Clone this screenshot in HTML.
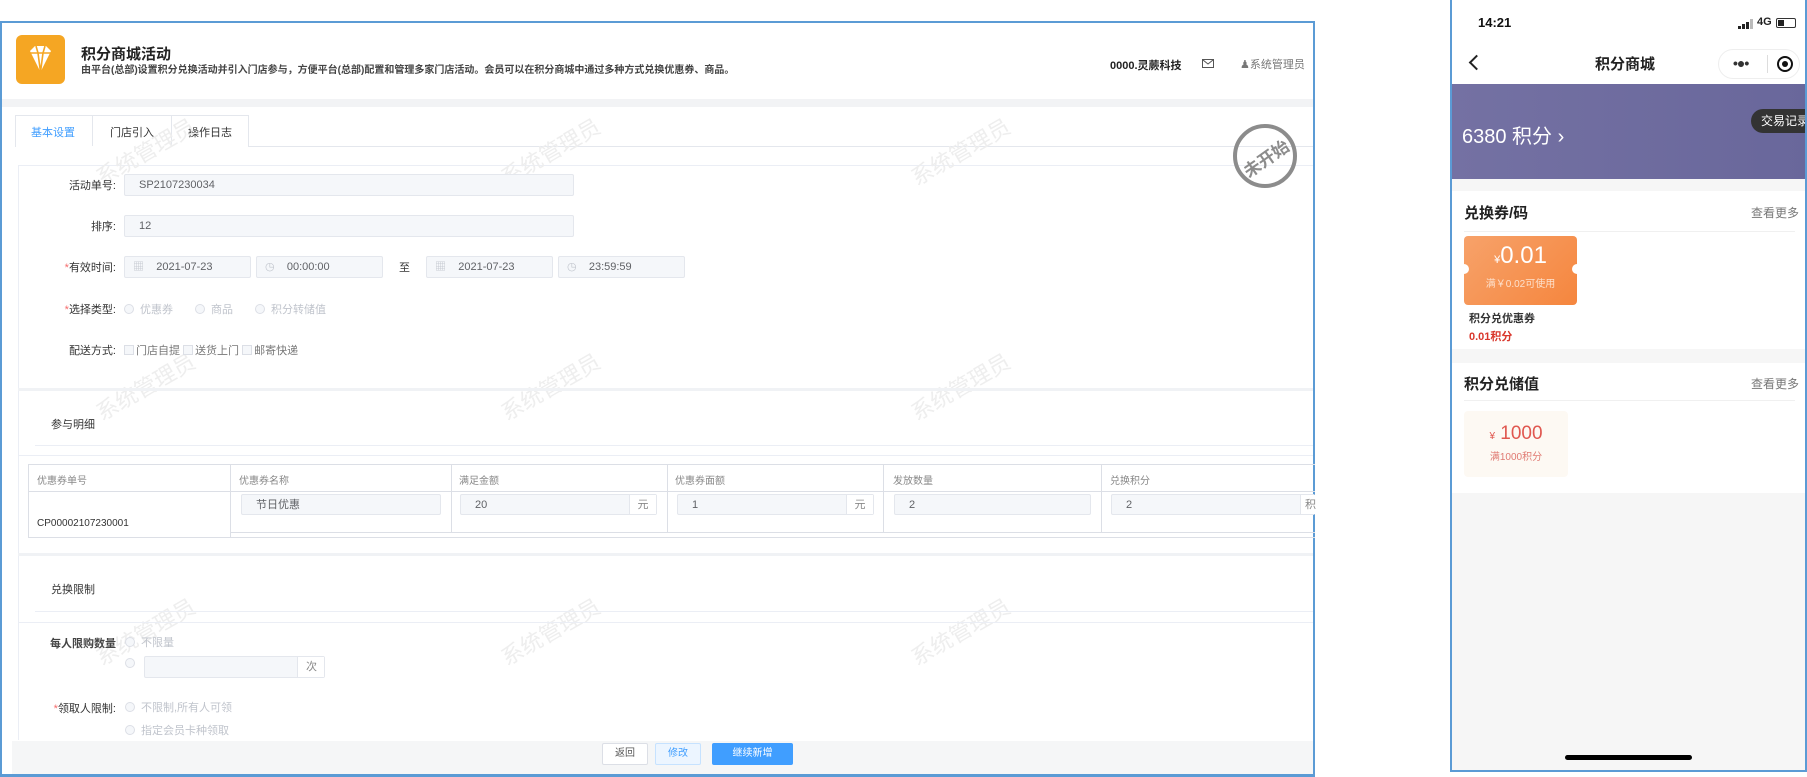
<!DOCTYPE html>
<html><head><meta charset="utf-8"><style>
*{margin:0;padding:0;box-sizing:border-box}
body{width:1807px;height:777px;background:#fff;position:relative;overflow:hidden;font-family:"Liberation Sans","Noto Sans CJK SC",sans-serif;color:#333;font-size:11px}
.a{position:absolute}
.inp{position:absolute;background:#f5f7fa;border:1px solid #e4e7ed;border-radius:2px;color:#606266;font-size:11px;line-height:20px;padding-left:14px}
.lbl{position:absolute;font-size:11px;color:#333;text-align:right;width:90px}
.req{color:#f56c6c}
.dis{color:#c0c4cc}
.rad{display:inline-block;width:10px;height:10px;border:1px solid #dcdfe6;border-radius:50%;vertical-align:-1px;margin-right:6px;background:#f5f7fa}
.chk{display:inline-block;width:10px;height:10px;border:1px solid #dcdfe6;vertical-align:-1px;margin-right:2px;background:#f5f7fa}
.wm{position:absolute;color:#eee;font-size:22px;transform:rotate(-30deg);white-space:nowrap}
.line{position:absolute;height:1px;background:#ebeef5}
</style></head><body>
<div class="a" style="left:0;top:21px;width:1315px;height:756px;border:2px solid #5b9bd5;border-bottom-width:3px"></div>
<div class="a" style="left:16px;top:35px;width:49px;height:49px;background:#f5a623;border-radius:6px">
<svg width="49" height="49" viewBox="0 0 49 49"><path d="M14 16 L19 11 H30 L35 16 L24.5 37 Z" fill="#fff"/><path d="M14 18 H35 M20 11 L22 18 L24.5 37 M29 11 L27 18 L24.5 37" stroke="#f5a623" stroke-width="1.6" fill="none"/></svg></div>
<div class="a" style="left:81px;top:43px;font-size:15px;font-weight:bold;color:#222">积分商城活动</div>
<div class="a" style="left:81px;top:61px;font-size:10px;font-weight:bold;color:#444">由平台(总部)设置积分兑换活动并引入门店参与，方便平台(总部)配置和管理多家门店活动。会员可以在积分商城中通过多种方式兑换优惠券、商品。</div>
<div class="a" style="left:1110px;top:57px;font-size:11px;font-weight:bold;color:#222">0000.灵蕨科技</div>
<div class="a" style="left:1202px;top:59px;width:12px;height:9px;border:1px solid #555"><svg width="10" height="7" style="position:absolute;left:0;top:0"><path d="M0 0 L5 4 L10 0" stroke="#555" fill="none"/></svg></div>
<div class="a" style="left:1240px;top:56px;font-size:11px;color:#777">&#9823;系统管理员</div>
<div class="a" style="left:2px;top:99px;width:1311px;height:8px;background:#f2f3f5"></div>
<div class="line" style="left:15px;top:146px;width:1298px;background:#e4e7ed"></div>
<div class="a" style="left:15px;top:115px;width:234px;height:32px;border:1px solid #e4e7ed;border-bottom:none;background:#fff"></div>
<div class="a" style="left:92px;top:115px;width:1px;height:31px;background:#e4e7ed"></div>
<div class="a" style="left:171px;top:115px;width:1px;height:31px;background:#e4e7ed"></div>
<div class="a" style="left:31px;top:124px;font-size:11px;color:#409eff">基本设置</div>
<div class="a" style="left:110px;top:124px;font-size:11px;color:#333">门店引入</div>
<div class="a" style="left:188px;top:124px;font-size:11px;color:#333">操作日志</div>
<div class="line" style="left:18px;top:165px;width:1295px"></div>
<div class="a" style="left:18px;top:165px;width:1px;height:575px;background:#ebeef5"></div>
<div class="a" style="left:1233px;top:124px;width:64px;height:64px;border:4px solid #8c8c8c;border-radius:50%"></div>
<div class="a" style="left:1240px;top:145px;font-size:17px;font-weight:bold;color:#8c8c8c;transform:rotate(-35deg)">未开始</div>
<div class="wm" style="left:90px;top:135px">系统管理员</div><div class="wm" style="left:495px;top:135px">系统管理员</div><div class="wm" style="left:905px;top:135px">系统管理员</div>
<div class="wm" style="left:90px;top:370px">系统管理员</div><div class="wm" style="left:495px;top:370px">系统管理员</div><div class="wm" style="left:905px;top:370px">系统管理员</div>
<div class="wm" style="left:90px;top:615px">系统管理员</div><div class="wm" style="left:495px;top:615px">系统管理员</div><div class="wm" style="left:905px;top:615px">系统管理员</div>
<div class="lbl" style="left:26px;top:177px">活动单号:</div>
<div class="inp" style="left:124px;top:174px;width:450px;height:22px">SP2107230034</div>
<div class="lbl" style="left:26px;top:218px">排序:</div>
<div class="inp" style="left:124px;top:215px;width:450px;height:22px">12</div>
<div class="lbl" style="left:26px;top:259px"><span class="req">*</span>有效时间:</div>
<div class="inp" style="left:124px;top:256px;width:127px;height:22px;padding-left:8px"><span class="dis">&#9638;</span>&nbsp;&nbsp;&nbsp;&nbsp;2021-07-23</div>
<div class="inp" style="left:256px;top:256px;width:127px;height:22px;padding-left:8px"><span class="dis">&#9719;</span>&nbsp;&nbsp;&nbsp;&nbsp;00:00:00</div>
<div class="a" style="left:399px;top:259px;font-size:11px">至</div>
<div class="inp" style="left:426px;top:256px;width:127px;height:22px;padding-left:8px"><span class="dis">&#9638;</span>&nbsp;&nbsp;&nbsp;&nbsp;2021-07-23</div>
<div class="inp" style="left:558px;top:256px;width:127px;height:22px;padding-left:8px"><span class="dis">&#9719;</span>&nbsp;&nbsp;&nbsp;&nbsp;23:59:59</div>
<div class="lbl" style="left:26px;top:301px"><span class="req">*</span>选择类型:</div>
<div class="a dis" style="left:124px;top:301px;font-size:11px"><span class="rad"></span>优惠券<span style="margin-left:22px"></span><span class="rad"></span>商品<span style="margin-left:22px"></span><span class="rad"></span>积分转储值</div>
<div class="lbl" style="left:26px;top:342px">配送方式:</div>
<div class="a" style="left:124px;top:342px;font-size:11px;color:#777"><span class="chk"></span>门店自提 <span class="chk"></span>送货上门 <span class="chk"></span>邮寄快递</div>
<div class="a" style="left:18px;top:388px;width:1295px;height:3px;background:#f0f2f5"></div>
<div class="a" style="left:51px;top:416px;font-size:11px">参与明细</div>
<div class="line" style="left:35px;top:445px;width:1278px"></div>
<div class="line" style="left:18px;top:455px;width:1295px"></div>
<div class="a" style="left:28px;top:464px;width:1287px;height:74px;border:1px solid #dcdfe6;border-right:none"></div>
<div class="line" style="left:28px;top:491px;width:1287px;background:#dcdfe6"></div>
<div class="line" style="left:230px;top:532px;width:1085px;background:#dcdfe6"></div>
<div class="a" style="left:230px;top:464px;width:1px;height:73px;background:#dcdfe6"></div>
<div class="a" style="left:451px;top:464px;width:1px;height:68px;background:#dcdfe6"></div>
<div class="a" style="left:667px;top:464px;width:1px;height:68px;background:#dcdfe6"></div>
<div class="a" style="left:883px;top:464px;width:1px;height:68px;background:#dcdfe6"></div>
<div class="a" style="left:1101px;top:464px;width:1px;height:68px;background:#dcdfe6"></div>
<div class="a" style="left:37px;top:472px;color:#888;font-size:10px">优惠券单号</div>
<div class="a" style="left:239px;top:472px;color:#888;font-size:10px">优惠券名称</div>
<div class="a" style="left:459px;top:472px;color:#888;font-size:10px">满足金额</div>
<div class="a" style="left:675px;top:472px;color:#888;font-size:10px">优惠券面额</div>
<div class="a" style="left:893px;top:472px;color:#888;font-size:10px">发放数量</div>
<div class="a" style="left:1110px;top:472px;color:#888;font-size:10px">兑换积分</div>
<div class="a" style="left:37px;top:518px;font-size:10px;color:#333">CP00002107230001</div>
<div class="inp" style="left:241px;top:494px;width:200px;height:21px">节日优惠</div>
<div class="inp" style="left:460px;top:494px;width:197px;height:21px">20<span class="a" style="right:0;top:0;width:27px;height:19px;background:#fff;border-left:1px solid #e4e7ed;text-align:center;padding:0;color:#888">元</span></div>
<div class="inp" style="left:677px;top:494px;width:197px;height:21px">1<span class="a" style="right:0;top:0;width:27px;height:19px;background:#fff;border-left:1px solid #e4e7ed;text-align:center;color:#888">元</span></div>
<div class="inp" style="left:894px;top:494px;width:197px;height:21px">2</div>
<div class="inp" style="left:1111px;top:494px;width:204px;height:21px">2<span class="a" style="left:188px;top:0;width:20px;height:19px;background:#fff;border-left:1px solid #e4e7ed;color:#888;padding-left:4px">积</span></div>
<div class="a" style="left:18px;top:553px;width:1295px;height:3px;background:#f0f2f5"></div>
<div class="a" style="left:51px;top:581px;font-size:11px">兑换限制</div>
<div class="line" style="left:35px;top:611px;width:1278px"></div>
<div class="line" style="left:18px;top:622px;width:1295px"></div>
<div class="lbl" style="left:26px;top:635px;font-weight:bold;color:#444">每人限购数量</div>
<div class="a dis" style="left:125px;top:634px;font-size:11px"><span class="rad"></span>不限量</div>
<div class="a" style="left:125px;top:658px"><span class="rad"></span></div>
<div class="inp" style="left:144px;top:656px;width:181px;height:22px"><span class="a" style="right:0;top:0;width:27px;height:20px;background:#fff;border-left:1px solid #e4e7ed;color:#888;padding-left:8px">次</span></div>
<div class="lbl" style="left:26px;top:700px"><span class="req">*</span>领取人限制:</div>
<div class="a dis" style="left:125px;top:699px;font-size:11px"><span class="rad"></span>不限制,所有人可领</div>
<div class="a dis" style="left:125px;top:722px;font-size:11px"><span class="rad"></span>指定会员卡种领取</div>
<div class="a" style="left:12px;top:741px;width:1301px;height:33px;background:#f5f6f7"></div>
<div class="a" style="left:602px;top:743px;width:46px;height:22px;border:1px solid #dcdfe6;background:#fff;border-radius:2px;text-align:center;line-height:20px;font-size:10px;color:#555">返回</div>
<div class="a" style="left:655px;top:743px;width:46px;height:22px;border:1px solid #c6e2ff;background:#ecf5ff;border-radius:2px;text-align:center;line-height:20px;font-size:10px;color:#409eff">修改</div>
<div class="a" style="left:712px;top:743px;width:81px;height:22px;background:#409eff;border-radius:2px;text-align:center;line-height:22px;font-size:10px;color:#fff">继续新增</div>
<!-- phone -->
<div class="a" style="left:1450px;top:0;width:357px;height:772px;border:2px solid #5b9bd5;border-top:none;background:#f6f6f6;overflow:hidden">
<div class="a" style="left:0;top:0;width:355px;height:84px;background:#fff"></div>
<div class="a" style="left:26px;top:15px;font-size:13px;font-weight:bold;color:#111">14:21</div>
<svg class="a" style="left:286px;top:19px" width="16" height="10"><rect x="0" y="7" width="3" height="3" fill="#222"/><rect x="4" y="5" width="3" height="5" fill="#222"/><rect x="8" y="3" width="3" height="7" fill="#222"/><rect x="12" y="0" width="3" height="10" fill="#bbb"/></svg>
<div class="a" style="left:305px;top:16px;font-size:11px;font-weight:bold;color:#222">4G</div>
<div class="a" style="left:324px;top:18px;width:20px;height:10px;border:1px solid #333;border-radius:2px"><div style="margin:1px;width:6px;height:6px;background:#222"></div></div>
<div class="a" style="left:19px;top:57px;width:11px;height:11px;border-left:2px solid #222;border-bottom:2px solid #222;transform:rotate(45deg)"></div>
<div class="a" style="left:143px;top:53px;font-size:15px;font-weight:bold;color:#222">积分商城</div>
<div class="a" style="left:266px;top:49px;width:82px;height:30px;border:1px solid #eee;border-radius:15px"></div>
<div class="a" style="left:281px;top:55px;font-size:14px;font-weight:bold;letter-spacing:-1px">•●•</div>
<div class="a" style="left:315px;top:55px;width:1px;height:18px;background:#ddd"></div>
<div class="a" style="left:325px;top:56px;width:16px;height:16px;border:2px solid #111;border-radius:50%"><div style="margin:3px;width:6px;height:6px;background:#111;border-radius:50%"></div></div>
<div class="a" style="left:0;top:84px;width:355px;height:95px;background:linear-gradient(90deg,#7471a3,#69679b)"></div>
<div class="a" style="left:10px;top:120px;font-size:20px;color:#fff">6380 积分 ›</div>
<div class="a" style="left:299px;top:109px;width:70px;height:24px;background:#333;border-radius:12px;color:#fff;font-size:12px;line-height:24px;padding-left:10px">交易记录</div>
<div class="a" style="left:0;top:191px;width:355px;height:158px;background:#fff"></div>
<div class="a" style="left:12px;top:202px;font-size:15px;font-weight:bold;color:#222">兑换券/码</div>
<div class="a" style="left:299px;top:204px;font-size:12px;color:#777">查看更多</div>
<div class="line" style="left:12px;top:231px;width:331px;background:#f0f0f0"></div>
<div class="a" style="left:12px;top:236px;width:113px;height:69px;background:linear-gradient(135deg,#f7a26a,#f5863e);border-radius:4px;text-align:center;color:#fff">
<div style="font-size:24px;margin-top:6px"><span style="font-size:11px">¥</span>0.01</div><div style="font-size:10px;color:#fde0cc;margin-top:5px">满￥0.02可使用</div>
<div class="a" style="left:-5px;top:28px;width:10px;height:10px;border-radius:50%;background:#fff"></div><div class="a" style="right:-5px;top:28px;width:10px;height:10px;border-radius:50%;background:#fff"></div></div>
<div class="a" style="left:17px;top:310px;font-size:11px;font-weight:bold;color:#333">积分兑优惠券</div>
<div class="a" style="left:17px;top:328px;font-size:11px;font-weight:bold;color:#d9362b">0.01积分</div>
<div class="a" style="left:0;top:363px;width:355px;height:130px;background:#fff"></div>
<div class="a" style="left:12px;top:373px;font-size:15px;font-weight:bold;color:#222">积分兑储值</div>
<div class="a" style="left:299px;top:375px;font-size:12px;color:#777">查看更多</div>
<div class="line" style="left:12px;top:400px;width:331px;background:#f0f0f0"></div>
<div class="a" style="left:12px;top:411px;width:104px;height:66px;background:#fdf9f3;border-radius:4px;text-align:center;color:#e0574f">
<div style="font-size:19px;margin-top:12px"><span style="font-size:10px">¥</span> 1000</div><div style="font-size:10px;margin-top:3px;color:#e07a72">满1000积分</div></div>
<div class="a" style="left:113px;top:755px;width:127px;height:5px;background:#000;border-radius:3px"></div>
</div>
</body></html>
